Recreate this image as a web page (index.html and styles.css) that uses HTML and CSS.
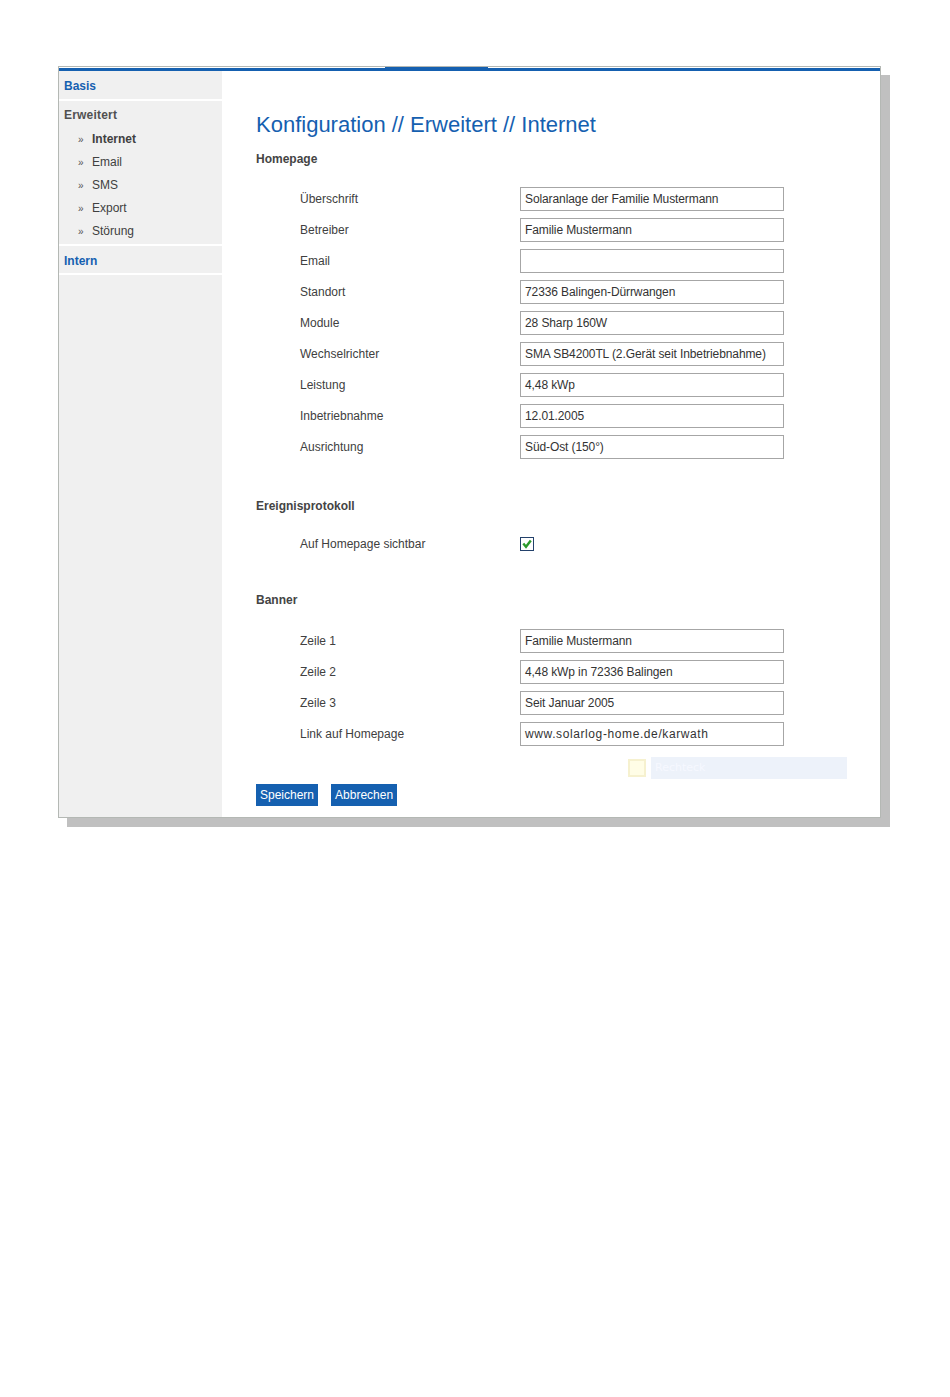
FILE: index.html
```html
<!DOCTYPE html>
<html lang="de">
<head>
    <meta charset="UTF-8">
    <title>Konfiguration - Erweitert - Internet</title>
    <link rel="stylesheet" href="styles.css">
</head>
<body>
    <div class="frame-wrap">
    <div class="frame">
        <div class="top-bar"></div>
        <div class="layout">
            <nav class="sidebar">
                <a href="#" class="nav-main nav-link">Basis</a>
                <div class="nav-group">
                    <div class="nav-title">Erweitert</div>
                    <ul class="sub-list">
                        <li class="active"><span class="bullet">&raquo;</span>Internet</li>
                        <li><span class="bullet">&raquo;</span>Email</li>
                        <li><span class="bullet">&raquo;</span>SMS</li>
                        <li><span class="bullet">&raquo;</span>Export</li>
                        <li><span class="bullet">&raquo;</span>Störung</li>
                    </ul>
                </div>
                <a href="#" class="nav-main nav-link nav-last">Intern</a>
            </nav>

            <main class="content">
                <h1 class="page-title">Konfiguration // Erweitert // Internet</h1>

                <h2 class="section-title">Homepage</h2>
                <div class="form-rows">
                    <div class="form-row"><label>Überschrift</label><div class="field">Solaranlage der Familie Mustermann</div></div>
                    <div class="form-row"><label>Betreiber</label><div class="field">Familie Mustermann</div></div>
                    <div class="form-row"><label>Email</label><div class="field"></div></div>
                    <div class="form-row"><label>Standort</label><div class="field">72336 Balingen-Dürrwangen</div></div>
                    <div class="form-row"><label>Module</label><div class="field">28 Sharp 160W</div></div>
                    <div class="form-row"><label>Wechselrichter</label><div class="field">SMA SB4200TL (2.Gerät seit Inbetriebnahme)</div></div>
                    <div class="form-row"><label>Leistung</label><div class="field">4,48 kWp</div></div>
                    <div class="form-row"><label>Inbetriebnahme</label><div class="field">12.01.2005</div></div>
                    <div class="form-row"><label>Ausrichtung</label><div class="field">Süd-Ost (150°)</div></div>
                </div>

                <h2 class="section-title section-gap">Ereignisprotokoll</h2>
                <div class="form-rows check-rows">
                    <div class="form-row">
                        <label>Auf Homepage sichtbar</label>
                        <span class="checkbox">
                            <svg width="14" height="14" viewBox="0 0 14 14">
                                <rect x="0.5" y="0.5" width="13" height="13" fill="#fff" stroke="#23416b"/>
                                <path d="M3.3 6.6 L6 9.8 L10.8 3.6" fill="none" stroke="#2c9a2c" stroke-width="2.4"/>
                            </svg>
                        </span>
                    </div>
                </div>

                <h2 class="section-title section-gap2">Banner</h2>
                <div class="form-rows banner-rows">
                    <div class="form-row"><label>Zeile 1</label><div class="field">Familie Mustermann</div></div>
                    <div class="form-row"><label>Zeile 2</label><div class="field">4,48 kWp in 72336 Balingen</div></div>
                    <div class="form-row"><label>Zeile 3</label><div class="field">Seit Januar 2005</div></div>
                    <div class="form-row"><label>Link auf Homepage</label><div class="field wide-text">www.solarlog-home.de/karwath</div></div>
                </div>

                <div class="ghost-row">
                    <span class="ghost-box"></span>
                    <span class="ghost-label">Rechteck</span>
                </div>

                <div class="buttons">
                    <button class="btn">Speichern</button>
                    <button class="btn">Abbrechen</button>
                </div>
            </main>
        </div>
    </div>
    </div>
</body>
</html>
```

FILE: styles.css
```css
:root {
    --blue: #1560b0;
    --text: #404040;
    --side-bg: #f0f0f0;
    --field-border: #a6a6a6;
}

html {
    height: 100%;
}

body {
    margin: 0;
    min-height: 100%;
    background: #ffffff;
    font-family: "Liberation Sans", Arial, sans-serif;
    font-size: 12px;
    color: var(--text);
}

.frame-wrap {
    position: relative;
    width: 823px;
    padding: 66px 0 20px 58px;
}

/* flat grey drop shadow */
.frame-wrap::before {
    content: "";
    position: absolute;
    top: 75px;
    left: 67px;
    width: 823px;
    height: 752px;
    background: #c0c0c0;
}

.frame {
    position: relative;
    width: 821px;
    height: 750px;
    border: 1px solid #b4b8b4;
    background: #ffffff;
    display: flex;
    flex-direction: column;
}

.top-bar {
    position: relative;
    height: 3px;
    margin-top: 1px;
    background: var(--blue);
}

.top-bar::before {
    content: "";
    position: absolute;
    top: -1px;
    left: 326px;
    width: 103px;
    height: 1px;
    background: var(--blue);
}

.layout {
    flex: 1;
    display: flex;
}

/* sidebar */
.sidebar {
    width: 163px;
    background: var(--side-bg);
    display: flex;
    flex-direction: column;
}

.nav-link {
    text-decoration: none;
}

.nav-main {
    display: block;
    height: 27px;
    line-height: 28px;
    padding: 1px 0 0 5px;
    color: var(--blue);
    font-weight: bold;
    font-size: 12px;
    border-bottom: 2px solid #ffffff;
}

.nav-last {
    height: 26px;
    line-height: 28px;
}

.nav-group {
    padding: 6px 0 1px 5px;
    border-bottom: 2px solid #ffffff;
}

.nav-title {
    line-height: 16px;
    font-size: 12px;
    font-weight: bold;
    color: #505050;
    letter-spacing: 0.2px;
}

.sub-list {
    list-style: none;
    margin: 5px 0 0 0;
    padding: 0 0 0 14px;
}

.sub-list li {
    height: 23px;
    line-height: 23px;
    color: var(--text);
}

.sub-list li.active {
    font-weight: bold;
}

.bullet {
    display: inline-block;
    width: 14px;
    font-size: 10px;
    font-weight: normal;
    color: #555;
}

/* content */
.content {
    flex: 1;
    padding: 41px 0 0 34px;
}

.page-title {
    margin: 0;
    font-size: 22px;
    line-height: 26px;
    font-weight: normal;
    color: var(--blue);
}

.section-title {
    margin: 13px 0 0 0;
    font-size: 12px;
    line-height: 16px;
    font-weight: bold;
    color: #444;
}

.section-gap {
    margin-top: 39px;
}

.section-gap2 {
    margin-top: 36px;
}

.form-rows {
    margin: 20px 0 0 44px;
    display: flex;
    flex-direction: column;
    gap: 7px;
}

.check-rows {
    margin-top: 18px;
}

.banner-rows {
    margin-top: 21px;
}

.form-row {
    display: flex;
    align-items: center;
    height: 24px;
}

.form-row label {
    width: 220px;
    color: var(--text);
}

.field {
    box-sizing: border-box;
    width: 264px;
    height: 24px;
    line-height: 22px;
    padding-left: 4px;
    border: 1px solid var(--field-border);
    color: #333;
    white-space: nowrap;
    overflow: hidden;
    letter-spacing: -0.1px;
}

.wide-text {
    letter-spacing: 0.6px;
}

.checkbox {
    display: flex;
    width: 14px;
    height: 14px;
}

.ghost-row {
    display: flex;
    align-items: center;
    gap: 5px;
    height: 22px;
    margin: 11px 0 0 372px;
}

.ghost-box {
    box-sizing: border-box;
    width: 18px;
    height: 18px;
    background: #fffde6;
    border: 2px solid #f6f1cf;
}

.ghost-label {
    width: 192px;
    height: 22px;
    line-height: 22px;
    padding-left: 4px;
    background: #edf2fa;
    color: #f6f8ff;
    font-family: "DejaVu Sans", sans-serif;
    font-size: 11px;
}

.buttons {
    display: flex;
    gap: 13px;
    margin-top: 5px;
}

.btn {
    height: 22px;
    padding: 0 4px;
    border: 0;
    background: var(--blue);
    color: #ffffff;
    font-family: "Liberation Sans", Arial, sans-serif;
    font-size: 12px;
    cursor: pointer;
}
```
